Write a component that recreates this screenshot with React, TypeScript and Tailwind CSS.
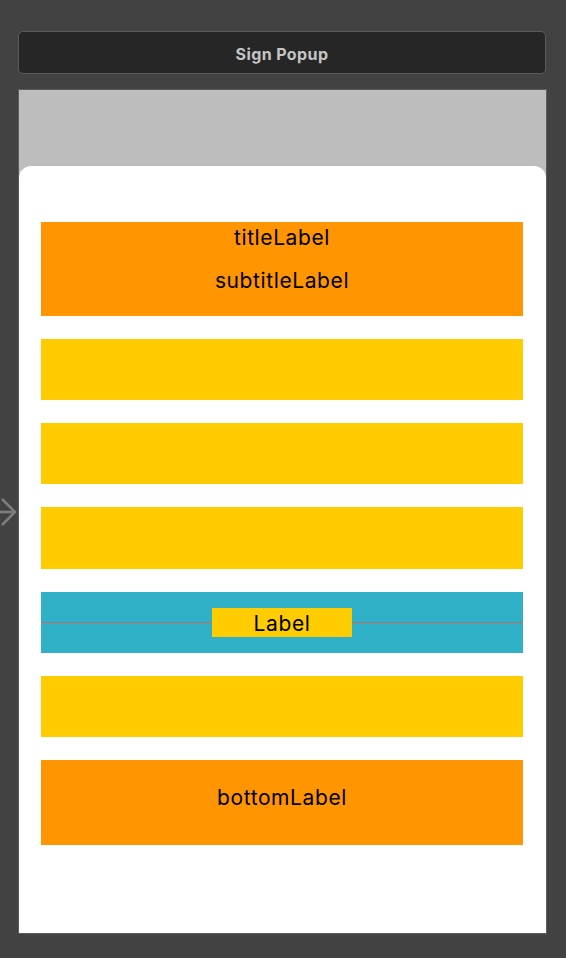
export default function App() {
    return (
        <div className="relative min-h-screen bg-[#424242] pt-[31px] pl-[18px] font-['Inter','Liberation_Sans',sans-serif]">
            {/* Entry point arrow */}
            <svg
                className="absolute left-0 top-[497px]"
                width="17"
                height="30"
                viewBox="0 0 17 30"
                fill="none"
                stroke="#7d7d7d"
                strokeWidth="2.6"
            >
                <path d="M-2 15H15" />
                <path d="M2 2L15 15L2 28" />
            </svg>

            {/* Scene title bar */}
            <div className="flex h-[43px] w-[528px] items-center justify-center rounded-[5px] border border-[#5b5b5b] bg-[#262626] pt-[3px]">
                <span className="text-[16px] font-bold tracking-[0.4px] text-[#c4c4c4]">Sign Popup</span>
            </div>

            {/* Canvas */}
            <div className="mt-[15px] flex h-[845px] w-[529px] flex-col border border-[#5c5c5c] bg-[#bdbdbd] pt-[76px]">
                <div className="flex flex-1 flex-col gap-[23px] rounded-t-[12px] bg-white pl-[22px] pr-[23px] pt-[56px] text-[21px] tracking-[0.6px] text-black">
                    <div className="flex h-[94px] flex-col items-center bg-[#ff9500]">
                        <div className="pt-[4px] leading-[24px]">titleLabel</div>
                        <div className="mt-[19px] leading-[24px]">subtitleLabel</div>
                    </div>
                    <div className="h-[61px] bg-[#ffcc00]" />
                    <div className="h-[61px] bg-[#ffcc00]" />
                    <div className="h-[62px] bg-[#ffcc00]" />
                    <div className="relative flex h-[61px] items-center justify-center bg-[#30b0c7]">
                        <div className="absolute left-0 right-0 top-[30px] h-px bg-[#c46b5f]" />
                        <div className="relative flex h-[29px] w-[140px] items-center justify-center bg-[#ffcc00] pt-[2px] leading-[24px]">
                            Label
                        </div>
                    </div>
                    <div className="h-[61px] bg-[#ffcc00]" />
                    <div className="flex h-[85px] justify-center bg-[#ff9500] pt-[26px] leading-[24px]">
                        bottomLabel
                    </div>
                </div>
            </div>
        </div>
    );
}
